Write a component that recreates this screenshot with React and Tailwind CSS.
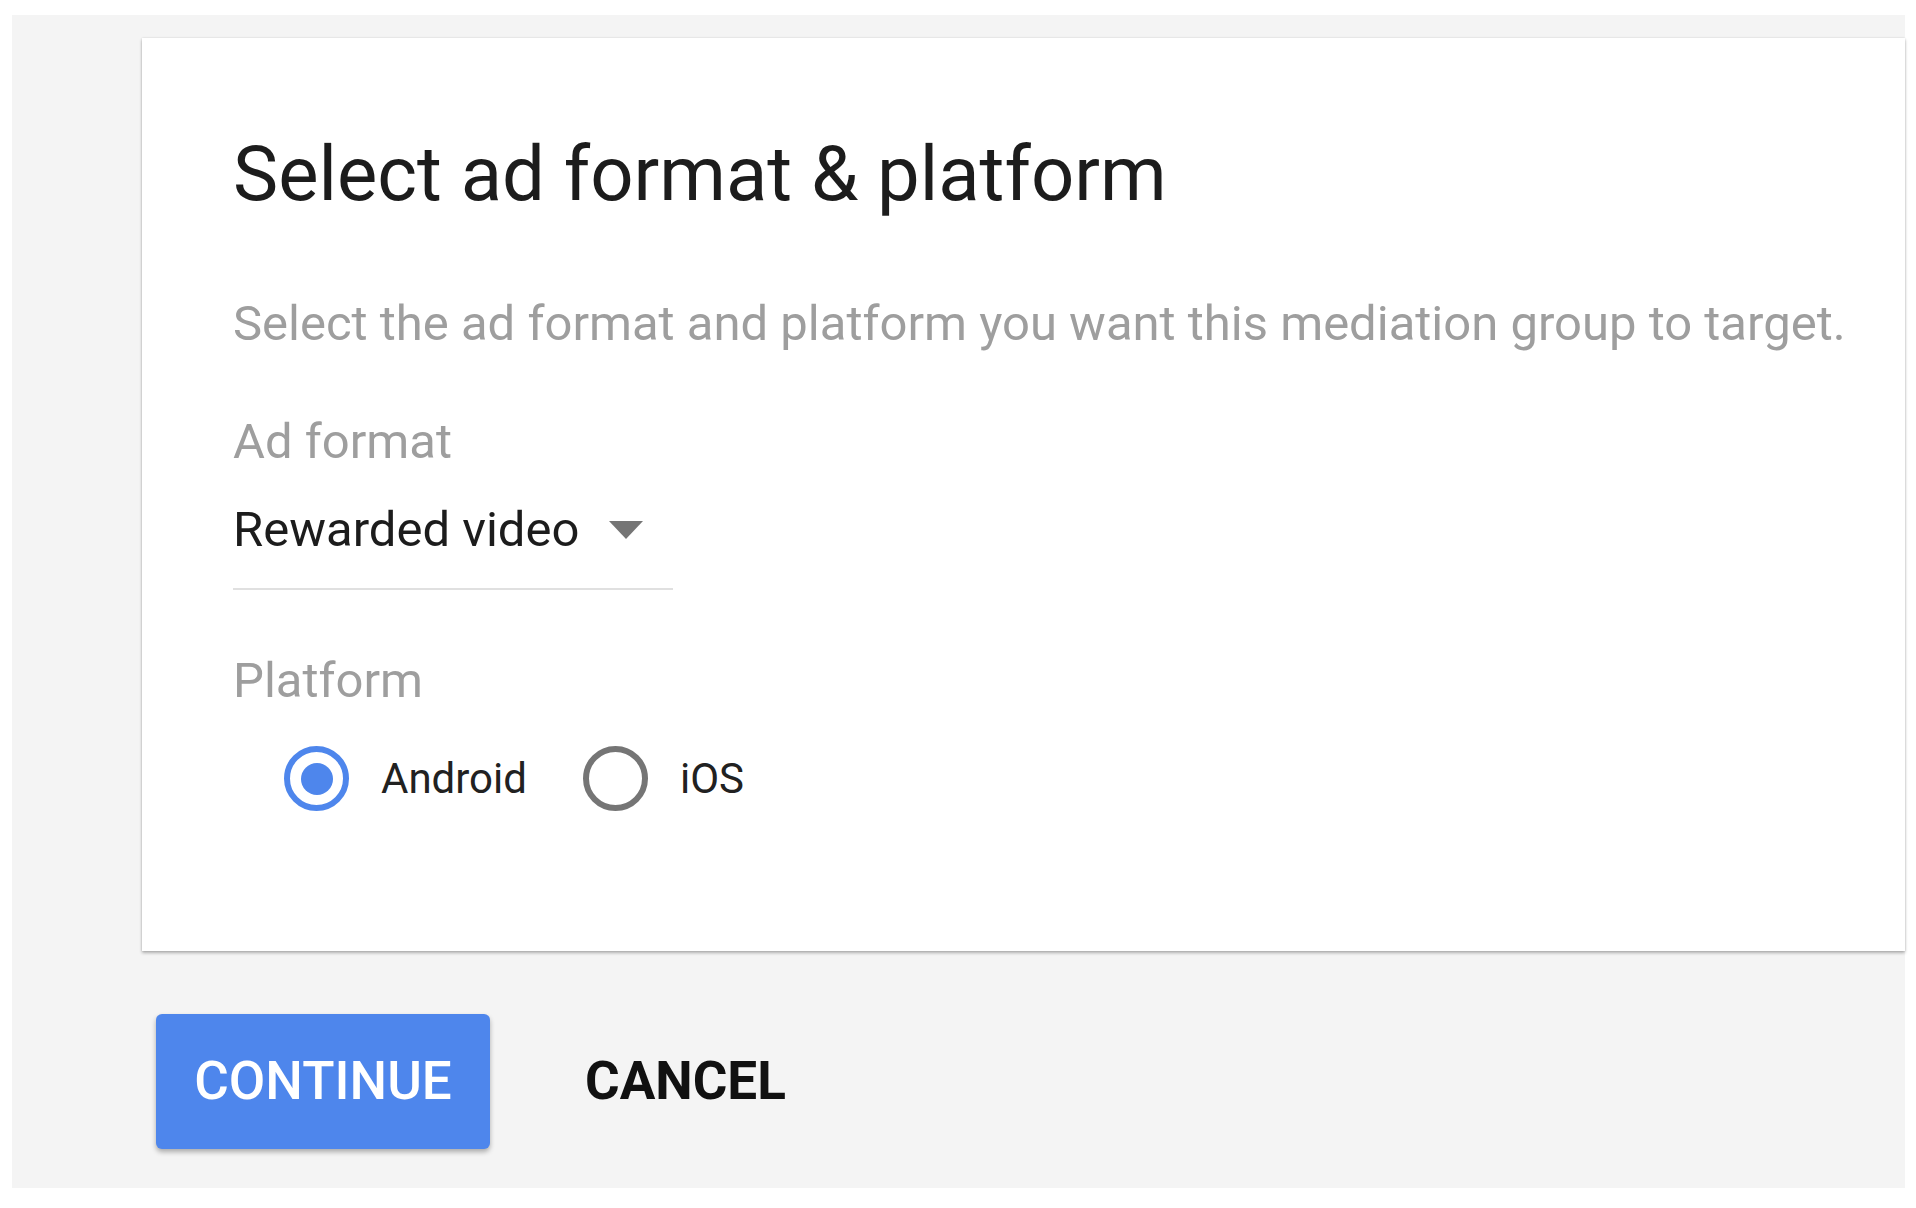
import { useState } from 'react'

function Radio({ checked, label, onClick }) {
  return (
    <button onClick={onClick} className="flex items-center">
      <span
        className={
          'w-[65px] h-[65px] rounded-full border-[6px] flex items-center justify-center ' +
          (checked ? 'border-[#4e86ec]' : 'border-[#757575]')
        }
      >
        {checked && <span className="w-[32px] h-[32px] rounded-full bg-[#4e86ec]" />}
      </span>
      <span className="ml-[32px] text-[42px] leading-[42px] text-[#212121]">{label}</span>
    </button>
  )
}

export default function App() {
  const [platform, setPlatform] = useState('android')

  return (
    <div className="bg-white w-[1916px] h-[1208px] pt-[15px] pl-[12px] pr-[11px] font-['Roboto',sans-serif]">
      <div className="bg-[#f4f4f4] h-[1173px] pt-[23px]">
        <div className="ml-[130px] h-[913px] bg-white shadow-[0_2px_3px_rgba(0,0,0,0.28),0_0_2px_rgba(0,0,0,0.12)] pl-[91px] pt-[98px]">
          <h1 className="text-[76px] leading-[76px] text-[#1c1c1c] font-normal">Select ad format &amp; platform</h1>
          <p className="mt-[87px] text-[49px] leading-[49px] text-[#9e9e9e]">
            Select the ad format and platform you want this mediation group to target.
          </p>
          <div className="mt-[69px] text-[49px] leading-[49px] text-[#9e9e9e]">Ad format</div>
          <div className="mt-[39px] w-[440px] border-b-2 border-[#e0e0e0] pb-[34px]">
            <button className="flex items-center text-[49px] leading-[49px] text-[#1c1c1c]">
              Rewarded video
              <svg className="ml-[30px]" width="34" height="18" viewBox="0 0 34 18">
                <path d="M0 0h34L17 18z" fill="#757575" />
              </svg>
            </button>
          </div>
          <div className="mt-[66px] text-[49px] leading-[49px] text-[#9e9e9e]">Platform</div>
          <div className="mt-[41px] ml-[51px] flex items-center gap-[56px]">
            <Radio checked={platform === 'android'} label="Android" onClick={() => setPlatform('android')} />
            <Radio checked={platform === 'ios'} label="iOS" onClick={() => setPlatform('ios')} />
          </div>
        </div>
        <div className="mt-[63px] ml-[144px] flex items-center">
          <button className="w-[334px] h-[135px] rounded-[6px] bg-[#4e86ec] text-white text-[53px] font-medium shadow-[0_3px_5px_rgba(0,0,0,0.3)]">
            CONTINUE
          </button>
          <button className="ml-[95px] text-[53px] font-bold text-[#111]">CANCEL</button>
        </div>
      </div>
    </div>
  )
}
